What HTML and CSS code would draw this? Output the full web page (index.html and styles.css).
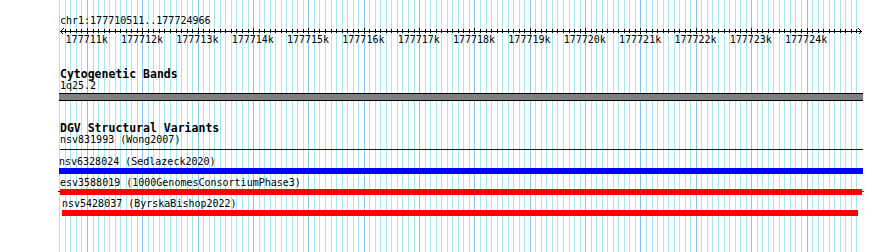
FILE: index.html
```html
<!DOCTYPE html>
<html>
<head>
  <title>Genome browser</title>
  <link rel="stylesheet" href="styles.css">
</head>
<body>
  <div class="browser">
    <svg class="grid" id="grid" width="890" height="252"></svg>

    <div class="tracks">
      <!-- Régua -->
      <div class="ruler">
        <div class="locus">chr1:177710511..177724966</div>
        <svg class="scale" id="scale" width="804" height="7"></svg>
        <div class="scale-labels">
          <span>177711k</span><span>177712k</span><span>177713k</span><span>177714k</span>
          <span>177715k</span><span>177716k</span><span>177717k</span><span>177718k</span>
          <span>177719k</span><span>177720k</span><span>177721k</span><span>177722k</span>
          <span>177723k</span><span>177724k</span>
        </div>
      </div>

      <!-- Bandas citogenéticas -->
      <div class="track bands">
        <div class="track-label">Cytogenetic Bands</div>
        <div class="band-label">1q25.2</div>
        <div class="band"></div>
      </div>

      <!-- Variantes estruturais -->
      <div class="track dgv">
        <div class="track-label">DGV Structural Variants</div>
        <div class="feature thin" style="margin-left: 1px; width: 803px;">
          <div class="feature-label">nsv831993 (Wong2007)</div>
          <div class="bar"></div>
        </div>
        <div class="feature blue" style="margin-left: 0px; width: 804px;">
          <div class="feature-label">nsv6328024 (Sedlazeck2020)</div>
          <div class="bar"></div>
        </div>
        <div class="feature red stub" style="margin-left: 1px; width: 802px;">
          <div class="feature-label">esv3588019 (1000GenomesConsortiumPhase3)</div>
          <div class="bar"></div>
        </div>
        <div class="feature red" style="margin-left: 3px; width: 796px;">
          <div class="feature-label">nsv5428037 (ByrskaBishop2022)</div>
          <div class="bar"></div>
        </div>
      </div>
    </div>
  </div>

  <script>
    // Região visível e escala (pixels por base)
    var START = 177710511;
    var SCALE = 0.05535;
    var X0 = 59.93;
    var NS = 'http://www.w3.org/2000/svg';

    function toX(bp) {
      return X0 + (bp - START) * SCALE;
    }

    function rect(svg, x, y, w, h, cls) {
      var r = document.createElementNS(NS, 'rect');
      r.setAttribute('x', x);
      r.setAttribute('y', y);
      r.setAttribute('width', w);
      r.setAttribute('height', h);
      r.setAttribute('class', cls);
      svg.appendChild(r);
    }

    var grid = document.getElementById('grid');
    var scale = document.getElementById('scale');

    // Linhas de grade a cada 100 pb, maiores a cada 1 kb
    for (var bp = 177710500; bp <= 177724900; bp += 100) {
      var x = Math.round(toX(bp));
      var major = bp % 1000 === 0;
      rect(grid, x, 0, 1, 252, major ? 'gridline major' : 'gridline');
      if (x > 61 && x < 858) {
        rect(scale, x - 59, major ? 1 : 2, 1, major ? 6 : 4, 'tick');
      }
    }

    // Eixo com setas nas pontas
    rect(scale, 1, 4, 802, 1, 'tick');
    var arrows = document.createElementNS(NS, 'path');
    arrows.setAttribute('d', 'M4.5 1.5 L1.5 4.5 L4.5 7.5 M799.5 1.5 L802.5 4.5 L799.5 7.5');
    arrows.setAttribute('class', 'arrow');
    scale.appendChild(arrows);
  </script>
</body>
</html>
```

FILE: styles.css
```css
body {
  font-family: "DejaVu Sans Mono", monospace;
  font-size: 10px;
  color: #000000;
  background-color: #ffffff;
  margin: 0;
  padding: 0;
}

.browser {
  position: relative;
  width: 890px;
  height: 252px;
  overflow: hidden;
}

.grid {
  position: absolute;
  left: 0;
  top: 0;
}

.gridline {
  fill: #a6e6ee;
}

.gridline.major {
  fill: #88c4ee;
}

.tracks {
  position: relative;
  width: 804px;
  margin-left: 59px;
  padding-top: 15px;
}

.locus {
  line-height: 12px;
  padding-left: 1px;
}

.scale {
  display: block;
  overflow: visible;
  shape-rendering: crispEdges;
}

.tick {
  fill: #000000;
}

.arrow {
  fill: none;
  stroke: #000000;
  stroke-width: 1;
}

.scale-labels {
  display: flex;
  line-height: 12px;
}

.scale-labels span {
  flex: 0 0 55.35px;
  text-align: center;
}

.track-label {
  font-weight: bold;
  font-size: 11.5px;
  line-height: 12px;
  padding-left: 1px;
}

.bands {
  margin-top: 22px;
}

.band-label {
  line-height: 12px;
  padding-left: 1px;
}

.band {
  margin-top: 1px;
  height: 6px;
  background-color: #808080;
  border-top: 1px solid #000000;
  border-bottom: 1px solid #000000;
}

.dgv {
  margin-top: 21px;
}

.feature-label {
  line-height: 12px;
}

.feature .bar {
  height: 6px;
}

.feature.thin .bar {
  margin-top: 3px;
  height: 1px;
  background-color: #0000a0;
}

.feature.blue {
  margin-top: 6px;
}

.feature.blue .bar {
  background-color: #0000ff;
}

.feature.red {
  margin-top: 3px;
}

.feature.red .bar {
  background-color: #ff0000;
}

.feature.stub .bar {
  position: relative;
}

.feature.stub .bar::before,
.feature.stub .bar::after {
  content: "";
  position: absolute;
  top: 2px;
  width: 2px;
  height: 1px;
}

.feature.stub .bar::before {
  left: -2px;
  background-color: #400000;
}

.feature.stub .bar::after {
  right: -2px;
  background-color: #ff0000;
}
```
